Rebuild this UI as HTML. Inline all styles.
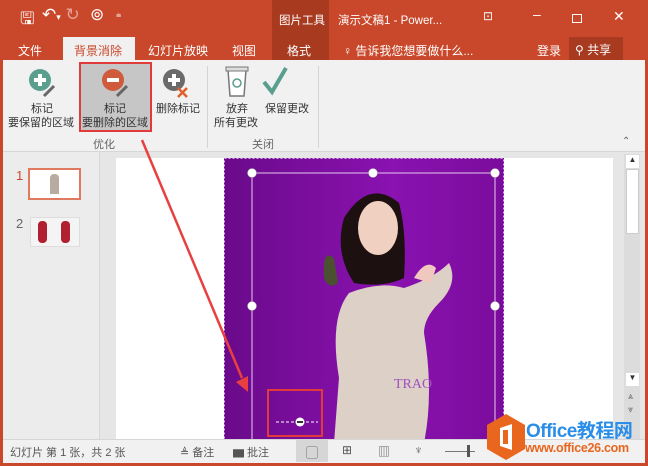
<!DOCTYPE html>
<html><head><meta charset="utf-8"><style>
*{margin:0;padding:0;box-sizing:border-box}
body{width:648px;height:466px;overflow:hidden;position:relative;background:#c9472a;font-family:"Liberation Sans","Noto Sans CJK SC",sans-serif;font-size:11px;color:#333}
.a{position:absolute;white-space:nowrap}
.t{color:#fff;font-size:12px;white-space:nowrap}
</style></head><body>
<div class="a" style="left:0;top:0;width:648px;height:60px;background:#c9472a"></div>
<div class="a" style="left:272px;top:0;width:57px;height:60px;background:#a83a20"></div>
<div class="a t" style="left:20px;top:6px;font-size:17px">🖫</div>
<div class="a t" style="left:42px;top:5px;font-size:17px">↶<span style="font-size:9px">▾</span> <span style="opacity:.5">↻</span></div>
<div class="a t" style="left:90px;top:5px;font-size:17px">⊚</div>
<div class="a t" style="left:116px;top:10px;font-size:9px">⩧</div>
<div class="a t" style="left:279px;top:12px;font-size:11.5px">图片工具</div>
<div class="a t" style="left:338px;top:12px;font-size:11.5px">演示文稿1 - Power...</div>
<div class="a t" style="left:483px;top:9px;font-size:12px">⊡</div>
<div class="a t" style="left:533px;top:6px;font-size:14px">–</div>
<div class="a" style="left:572px;top:14px;width:10px;height:9px;border:1px solid #fff"></div>
<div class="a t" style="left:613px;top:8px;font-size:14px">✕</div>
<div class="a t" style="left:18px;top:42px">文件</div>
<div class="a" style="left:63px;top:37px;width:72px;height:24px;background:#f0f0f0"></div>
<div class="a" style="left:74px;top:42px;font-size:12px;color:#c9472a">背景消除</div>
<div class="a t" style="left:148px;top:42px">幻灯片放映</div>
<div class="a t" style="left:232px;top:42px">视图</div>
<div class="a t" style="left:287px;top:42px">格式</div>
<div class="a t" style="left:343px;top:42px">♀ 告诉我您想要做什么...</div>
<div class="a t" style="left:537px;top:42px">登录</div>
<div class="a" style="left:569px;top:37px;width:54px;height:23px;background:#a83a20"></div>
<div class="a t" style="left:575px;top:41px">⚲ 共享</div>
<div class="a" style="left:3px;top:60px;width:642px;height:92px;background:#f1f1f1;border-bottom:1px solid #d6d6d6"></div>
<div class="a" style="left:79px;top:62px;width:73px;height:70px;background:#c6c6c6;border:2px solid #e03a3a"></div>
<svg class="a" style="left:0;top:62px" width="340" height="45">
<circle cx="40" cy="18" r="11" fill="#5a9e8e"/><rect x="34" y="16" width="12" height="4" fill="#fff"/><rect x="38" y="12" width="4" height="12" fill="#fff"/>
<line x1="44" y1="34" x2="54" y2="24" stroke="#666" stroke-width="3"/>
<circle cx="113" cy="18" r="11" fill="#d05a3c"/><rect x="107" y="16" width="12" height="4" fill="#fff"/>
<line x1="117" y1="34" x2="127" y2="24" stroke="#666" stroke-width="3"/>
<circle cx="174" cy="18" r="11" fill="#6a6a6a"/><rect x="168" y="16" width="12" height="4" fill="#fff"/><rect x="172" y="12" width="4" height="12" fill="#fff"/>
<path d="M178 26l9 9M187 26l-9 9" stroke="#e0602c" stroke-width="2.5"/>
<path d="M228 8h18l-2 26h-14z" fill="#fff" stroke="#777" stroke-width="1.5"/><rect x="226" y="5" width="22" height="4" fill="#ddd" stroke="#777"/><circle cx="237" cy="21" r="4" fill="none" stroke="#5a9e8e" stroke-width="1.5"/>
<path d="M264 20l8 10 14-24" fill="none" stroke="#5a9e8e" stroke-width="4"/>
</svg>
<div class="a" style="left:31px;top:100px">标记</div>
<div class="a" style="left:8px;top:114px;font-size:11px">要保留的区域</div>
<div class="a" style="left:104px;top:100px">标记</div>
<div class="a" style="left:82px;top:114px">要删除的区域</div>
<div class="a" style="left:156px;top:100px">删除标记</div>
<div class="a" style="left:226px;top:100px">放弃</div>
<div class="a" style="left:214px;top:114px">所有更改</div>
<div class="a" style="left:265px;top:100px">保留更改</div>
<div class="a" style="left:93px;top:136px;color:#666">优化</div>
<div class="a" style="left:252px;top:136px;color:#666">关闭</div>
<div class="a" style="left:207px;top:66px;width:1px;height:82px;background:#d4d4d4"></div>
<div class="a" style="left:318px;top:66px;width:1px;height:82px;background:#d4d4d4"></div>
<div class="a" style="left:622px;top:136px;font-size:10px;color:#666">⌃</div>
<div class="a" style="left:3px;top:152px;width:642px;height:287px;background:#e6e6e6"></div>
<div class="a" style="left:3px;top:152px;width:97px;height:287px;background:#ececec;border-right:1px solid #d6d6d6"></div>
<div class="a" style="left:16px;top:168px;color:#c9472a;font-size:13px">1</div>
<div class="a" style="left:28px;top:168px;width:53px;height:32px;background:#fff;border:2px solid #e07a5f"></div>
<div class="a" style="left:50px;top:174px;width:9px;height:20px;background:#b8aca0;border-radius:4px 4px 0 0"></div>
<div class="a" style="left:16px;top:216px;color:#666;font-size:13px">2</div>
<div class="a" style="left:30px;top:217px;width:50px;height:30px;background:#f4f4f4;border:1px solid #ddd"></div>
<div class="a" style="left:38px;top:221px;width:9px;height:22px;background:#b02030;border-radius:4px"></div>
<div class="a" style="left:61px;top:221px;width:9px;height:22px;background:#b02030;border-radius:4px"></div>
<div class="a" style="left:116px;top:158px;width:497px;height:282px;background:#fff"></div>
<div class="a" style="left:624px;top:154px;width:16px;height:285px;background:#dcdcdc"></div>
<div class="a" style="left:626px;top:155px;width:13px;height:13px;background:#fff;font-size:8px;text-align:center">▲</div>
<div class="a" style="left:626px;top:169px;width:13px;height:65px;background:#fff;border:1px solid #ccc"></div>
<div class="a" style="left:626px;top:373px;width:13px;height:13px;background:#fff;font-size:8px;text-align:center">▼</div>
<div class="a" style="left:628px;top:390px;font-size:9px;color:#666;line-height:13px">⩓<br>⩔</div>
<svg class="a" style="left:224px;top:158px" width="280" height="282">
<defs><linearGradient id="g" x1="0" x2="1"><stop offset="0" stop-color="#6a0a8a"/><stop offset=".6" stop-color="#8a12b0"/><stop offset="1" stop-color="#7a0c9c"/></linearGradient></defs>
<rect width="280" height="282" fill="url(#g)"/>
<rect x="0.5" y="0.5" width="279" height="281" fill="none" stroke="#d8a8e8" stroke-dasharray="2 2"/>
<path d="M110 100q-12-10 -10 20 5 12 14 5z" fill="#4a5030"/>
<path d="M120 60q25-40 55-15 8 30 5 75 -20 10 -50 5 -20-30 -10-65z" fill="#1c1010"/>
<ellipse cx="154" cy="70" rx="20" ry="27" fill="#f0d0c0"/>
<path d="M115 220q-10-60 10-85 30-12 55-5 30-10 45-25 10 20 -10 40 -15 15 -15 30 10 60 0 110h-90z" fill="#ddd0c6"/>
<path d="M190 120q12-20 22-10l-5 15z" fill="#f0c8c0"/>
<rect x="44" y="232" width="54" height="46" fill="none" stroke="#e03a3a" stroke-width="2"/>
<line x1="52" y1="264" x2="94" y2="264" stroke="#fff" stroke-dasharray="3 2"/>
<circle cx="76" cy="264" r="4.5" fill="#fff"/><rect x="73" y="263" width="6" height="2" fill="#333"/>
<text x="170" y="230" font-family="Liberation Serif" font-size="14" fill="#a050c0">TRAO</text>
<rect x="28" y="15" width="243" height="270" fill="none" stroke="#e8c8f0" stroke-width="1"/>
<g fill="#fff" stroke="#aaa" stroke-width=".5"><circle cx="28" cy="15" r="4.5"/><circle cx="149" cy="15" r="4.5"/><circle cx="271" cy="15" r="4.5"/><circle cx="28" cy="148" r="4.5"/><circle cx="271" cy="148" r="4.5"/></g>
</svg>
<svg class="a" style="left:0;top:0" width="648" height="466">
<line x1="142" y1="140" x2="242" y2="378" stroke="#e84040" stroke-width="2.5"/>
<path d="M236 382l12 10 0-16z" fill="#e84040"/>
</svg>
<div class="a" style="left:3px;top:439px;width:642px;height:24px;background:#f1f1f1;border-top:1px solid #d6d6d6"></div>
<div class="a" style="left:10px;top:444px;color:#555">幻灯片 第 1 张，共 2 张</div>
<div class="a" style="left:180px;top:444px;color:#555">≜ 备注</div>
<div class="a" style="left:233px;top:444px;color:#555">▆ 批注</div>
<div class="a" style="left:296px;top:440px;width:32px;height:22px;background:#d6d6d6"></div>
<div class="a" style="left:306px;top:444px;color:#555;font-size:12px">▢</div>
<div class="a" style="left:342px;top:443px;color:#555;font-size:12px">⊞</div>
<div class="a" style="left:378px;top:443px;color:#555;font-size:12px">▥</div>
<div class="a" style="left:414px;top:443px;color:#555;font-size:12px">♆</div>
<div class="a" style="left:445px;top:451px;width:30px;height:1px;background:#777"></div>
<div class="a" style="left:467px;top:445px;width:3px;height:12px;background:#555"></div>
<svg class="a" style="left:484px;top:412px" width="44" height="50"><path d="M22 2l19 11v24l-19 11-19-11v-24z" fill="#e8661e"/><path d="M16 16l12-4v26l-12-4z" fill="#fff"/><rect x="19" y="18" width="5" height="14" fill="#e8661e"/></svg>
<div class="a" style="left:526px;top:416px;font-size:19px;font-weight:bold;color:#2a8ee8;letter-spacing:-0.5px">Office教程网</div>
<div class="a" style="left:525px;top:441px;font-size:12.5px;font-weight:bold;color:#e8661e;letter-spacing:-0.3px">www.office26.com</div>
</body></html>
